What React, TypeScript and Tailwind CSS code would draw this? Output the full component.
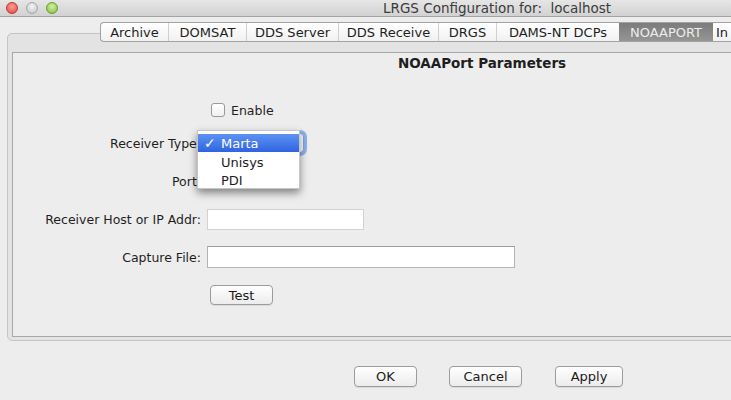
const tabs = [
  { label: "Archive", w: "w-[67px]" },
  { label: "DOMSAT", w: "w-[78px]" },
  { label: "DDS Server", w: "w-[92px]" },
  { label: "DDS Receive", w: "w-[100px]" },
  { label: "DRGS", w: "w-[58px]" },
  { label: "DAMS-NT DCPs", w: "w-[123px]" },
  { label: "NOAAPORT", w: "w-[94px]", active: true },
  { label: "In", w: "w-[19px]" },
];

function MacButton({ label, className }: { label: string; className: string }) {
  return (
    <div
      className={`flex items-center justify-center rounded-[4px] border border-[#9c9c9c] bg-gradient-to-b from-[#ffffff] to-[#ececec] pt-[1px] shadow-[0_1px_0_rgba(0,0,0,0.08)] text-[13px] text-[#1a1a1a] ${className}`}
    >
      {label}
    </div>
  );
}

function Row({ label, children }: { label: string; children?: React.ReactNode }) {
  return (
    <div className="flex h-[38px] items-center">
      <div className="w-[188px] pt-[3px] text-right whitespace-nowrap">{label}</div>
      <div className="ml-[6px] flex items-center">{children}</div>
    </div>
  );
}

export default function App() {
  return (
    <div className="relative h-[400px] w-[731px] overflow-hidden bg-[#ededed] font-['DejaVu_Sans',sans-serif] text-[12.5px] text-[#1e1e1e]">
      {/* title bar */}
      <div className="relative flex h-[17px] items-center border-b border-[#a3a3a3] bg-gradient-to-b from-[#e6e6e6] to-[#d2d2d2]">
        <div className="ml-[6px] flex gap-[8px]">
          <span className="h-[12px] w-[12px] rounded-full border border-[#b83a35] bg-[radial-gradient(circle_at_50%_35%,#ff9e96,#e0463d)]" />
          <span className="h-[12px] w-[12px] rounded-full border border-[#a4a4a4] bg-[radial-gradient(circle_at_50%_35%,#f4f4f4,#c2c2c2)]" />
          <span className="h-[12px] w-[12px] rounded-full border border-[#6d9a36] bg-[radial-gradient(circle_at_50%_35%,#d2f2a0,#7dbd3c)]" />
        </div>
        <div className="absolute left-[383px] top-[-2px] whitespace-pre text-[13.5px] text-[#3b3b3b]">
          LRGS Configuration for:  localhost
        </div>
      </div>

      <div className="pl-[7px] pt-[5px]">
        {/* tab strip */}
        <div className="relative z-10 ml-[93px] flex h-[20px] w-[700px] overflow-hidden rounded-l-[4px] border-y border-l border-[#a2a2a2] bg-gradient-to-b from-[#ffffff] to-[#f1f1f1] pt-[2px] text-[13px]">
          {tabs.map((t, i) => (
            <div
              key={t.label}
              className={`-mt-[2px] flex shrink-0 items-center justify-center pt-[2px] ${t.w} ${
                t.active
                  ? "bg-gradient-to-b from-[#7c7c7c] to-[#959595] text-[#ededed]"
                  : i > 0 && !tabs[i - 1].active
                  ? "border-l border-[#cfcfcf]"
                  : ""
              } ${t.label === "In" ? "justify-start pl-[3px]" : ""}`}
            >
              {t.label}
            </div>
          ))}
        </div>

        {/* tabbed pane */}
        <div className="-mt-[9px] h-[308px] w-[952px] rounded-[5px] border border-[#c4c4c4] bg-[#e3e3e3] px-[4px] pt-[18px]">
          <div className="h-[285px] w-[940px] border border-[#a8a8a8] bg-[#ededed]">
            <div className="mt-[2px] h-[16px] text-center text-[13.5px] font-bold leading-[16px]">
              NOAAPort Parameters
            </div>

            <div className="mt-[27px] flex h-[24px] items-center pl-[198px]">
              <span className="h-[14px] w-[14px] rounded-[3px] border border-[#9a9a9a] bg-gradient-to-b from-[#ffffff] to-[#f0f0f0]" />
              <span className="ml-[6px] pt-[3px]">Enable</span>
            </div>

            <div className="mt-[2px]">
              <Row label="Receiver Type:">
                <div className="h-[20px] w-[97px] rounded-[4px] border border-[#7ea6e0] bg-white ring-[3px] ring-[#8db2ea]" />
              </Row>
              <Row label="Port:">
                <div className="-mt-[4px] h-[14px] w-[70px] border border-[#b8b8b8] bg-white" />
              </Row>
              <Row label="Receiver Host or IP Addr:">
                <div className="h-[21px] w-[157px] border border-[#d2d2d2] bg-white" />
              </Row>
              <Row label="Capture File:">
                <div className="h-[22px] w-[308px] border border-[#b4b4b4] border-t-[#9c9c9c] bg-white" />
              </Row>
              <Row label="">
                <MacButton label="Test" className="ml-[3px] h-[20px] w-[63px]" />
              </Row>
            </div>
          </div>
        </div>
      </div>

      {/* dialog buttons */}
      <div className="mt-[25px] flex pl-[354px]">
        <MacButton label="OK" className="h-[21px] w-[63px]" />
        <MacButton label="Cancel" className="ml-[32px] h-[21px] w-[73px]" />
        <MacButton label="Apply" className="ml-[33px] h-[21px] w-[68px]" />
      </div>

      {/* combo popup */}
      <div className="absolute left-[197px] top-[130px] h-[59px] w-[103px] border border-[#c6c6c6] bg-white pt-[3px] text-[13px] shadow-[0_4px_8px_rgba(0,0,0,0.45)]">
        <div className="flex h-[18px] items-center bg-gradient-to-b from-[#5d93f2] to-[#2f63e0] pt-[1px] text-white">
          <span className="w-[23px] pl-[6px] text-[14px]">✓</span>
          <span>Marta</span>
        </div>
        <div className="flex h-[19px] items-center pl-[23px] pt-[3px]">Unisys</div>
        <div className="flex h-[17px] items-center pl-[23px] pt-[2px]">PDI</div>
      </div>
    </div>
  );
}
